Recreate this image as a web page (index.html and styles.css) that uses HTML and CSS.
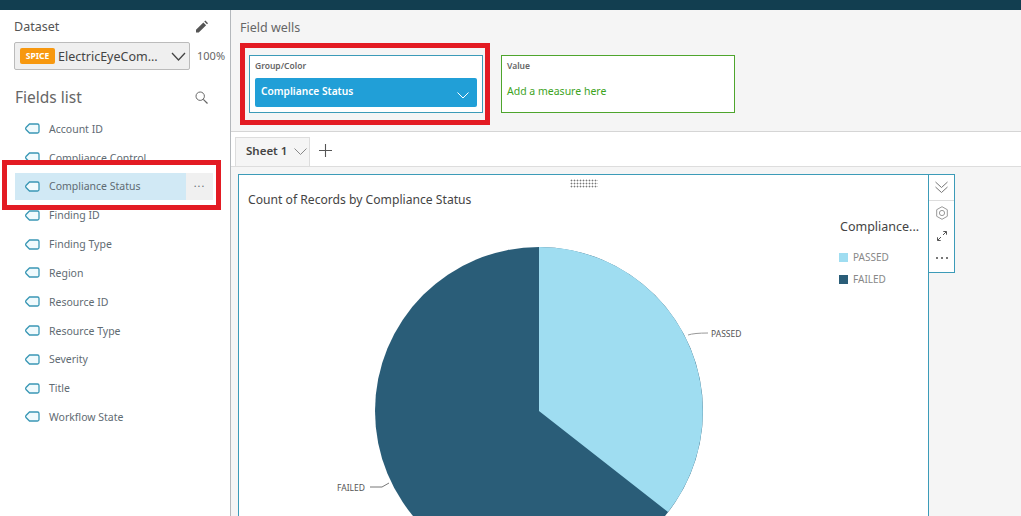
FILE: index.html
```html
<!DOCTYPE html>
<html lang="en">
<head>
  <meta charset="UTF-8">
  <title>Compliance Status analysis</title>
  <link rel="stylesheet" href="styles.css">
</head>
<body>
<svg class="defs" width="0" height="0">
  <symbol id="tag" viewBox="0 0 15 11">
    <path d="M4.5 1H12.5Q14 1 14 2.5V8.5Q14 10 12.5 10H4.5L1 6.5Q.3 5.5 1 4.5Z" fill="#f0fafd" stroke="#3a97b5" stroke-width="1.3"/>
  </symbol>
</svg>
<div class="topbar"></div>
<div class="app">
  <aside class="sidebar">
    <div class="dataset-head">
      <span>Dataset</span>
      <svg class="pencil" width="12" height="13" viewBox="0 0 14 14"><path d="M0 14V10.8L8.6 2.2L11.8 5.4L3.2 14ZM9.6 1.2L10.6.2Q10.9 0 11.2.2L13.8 2.8Q14 3.1 13.8 3.4L12.8 4.4Z" fill="#555"/></svg>
    </div>
    <div class="dataset-row">
      <div class="dataset-select">
        <span class="spice">SPICE</span>
        <span class="dataset-name">ElectricEyeCom...</span>
        <svg width="15" height="9" viewBox="0 0 15 9"><path d="M1 1L7.5 8L14 1" fill="none" stroke="#444" stroke-width="1.3"/></svg>
      </div>
      <span class="percent">100%</span>
    </div>
    <div class="fields-head">
      <span>Fields list</span>
      <svg width="13" height="13" viewBox="0 0 13 13"><circle cx="5.2" cy="5.2" r="4.2" fill="none" stroke="#666"/><path d="M8.3 8.3L12.5 12.5" stroke="#666" stroke-width="1.2"/></svg>
    </div>
    <ul class="fields">
      <li class="field"><svg class="tag"><use href="#tag"/></svg><span class="field-name">Account ID</span></li>
      <li class="field"><svg class="tag"><use href="#tag"/></svg><span class="field-name">Compliance Control</span></li>
      <li class="field selected"><svg class="tag"><use href="#tag"/></svg><span class="field-name">Compliance Status</span><span class="field-more">...</span></li>
      <li class="field"><svg class="tag"><use href="#tag"/></svg><span class="field-name">Finding ID</span></li>
      <li class="field"><svg class="tag"><use href="#tag"/></svg><span class="field-name">Finding Type</span></li>
      <li class="field"><svg class="tag"><use href="#tag"/></svg><span class="field-name">Region</span></li>
      <li class="field"><svg class="tag"><use href="#tag"/></svg><span class="field-name">Resource ID</span></li>
      <li class="field"><svg class="tag"><use href="#tag"/></svg><span class="field-name">Resource Type</span></li>
      <li class="field"><svg class="tag"><use href="#tag"/></svg><span class="field-name">Severity</span></li>
      <li class="field"><svg class="tag"><use href="#tag"/></svg><span class="field-name">Title</span></li>
      <li class="field"><svg class="tag"><use href="#tag"/></svg><span class="field-name">Workflow State</span></li>
    </ul>
  </aside>
  <main class="content">
    <section class="wells">
      <div class="wells-title">Field wells</div>
      <div class="wells-row">
        <div class="well well-group">
          <div class="well-label">Group/Color</div>
          <div class="pill">
            <span class="pill-text">Compliance Status</span>
            <svg width="12" height="7" viewBox="0 0 12 7"><path d="M.5 .5L6 6L11.5 .5" fill="none" stroke="#fff"/></svg>
          </div>
        </div>
        <div class="well well-value">
          <div class="well-label">Value</div>
          <div class="well-hint">Add a measure here</div>
        </div>
      </div>
    </section>
    <nav class="tabs">
      <div class="tab">
        <span class="tab-name">Sheet 1</span>
        <svg width="13" height="7" viewBox="0 0 13 7"><path d="M.5 .5L6.5 6.5L12.5 .5" fill="none" stroke="#888"/></svg>
      </div>
      <svg class="tab-add" width="13" height="13" viewBox="0 0 13 13"><path d="M6.5 0V13M0 6.5H13" stroke="#555" stroke-width="1.1"/></svg>
    </nav>
    <section class="canvas">
      <div class="visual">
        <div class="grip"></div>
        <div class="visual-title">Count of Records by Compliance Status</div>
        <div class="visual-body">
          <svg class="pie" width="560" height="310" viewBox="0 0 560 310">
            <circle cx="291" cy="205" r="164" fill="#2a5d78"/>
            <path d="M291 205V41A164 164 0 0 1 420 306Z" fill="#9fddf1"/>
            <path d="M440 129Q446 127 460 127" fill="none" stroke="#999"/>
            <text x="463" y="130.500" class="pie-label">PASSED</text>
            <path d="M122 281H134L141 277" fill="none" stroke="#777"/>
            <text x="89" y="284.500" class="pie-label">FAILED</text>
          </svg>
          <div class="legend">
            <div class="legend-title">Compliance...</div>
            <div class="legend-item"><span class="swatch swatch-passed"></span>PASSED</div>
            <div class="legend-item"><span class="swatch swatch-failed"></span>FAILED</div>
          </div>
        </div>
      </div>
      <div class="visual-menu">
        <div class="menu-top">
          <svg width="13" height="13" viewBox="0 0 13 13"><path d="M.5 1L6.500 6.500L12.500 1M.5 6L6.500 11.500L12.500 6" fill="none" stroke="#777"/></svg>
        </div>
        <svg width="12" height="14" viewBox="0 0 12 14"><path d="M6 .7L11.300 3.700V10.300L6 13.300L.7 10.300V3.700Z" fill="none" stroke="#999"/><circle cx="6" cy="7" r="2.600" fill="none" stroke="#999"/></svg>
        <svg class="menu-expand" width="10" height="10" viewBox="0 0 10 10"><path d="M6 4L9.300 .7M6.300 .5H9.500V3.700M4 6L.7 9.300M.5 6.300V9.500H3.700" fill="none" stroke="#555"/></svg>
        <span class="menu-dots"><i></i><i></i><i></i></span>
      </div>
    </section>
  </main>
</div>
<div class="callout callout-field"></div>
<div class="callout callout-well"></div>
</body>
</html>
```

FILE: styles.css
```css
* {
  box-sizing: border-box;
}
html, body {
  height: 516px;
  margin: 0;
  overflow: hidden;
}
body {
  font-family: "Noto Sans", Arial, sans-serif;
  color: #555;
  background: #fff;
  position: relative;
}
.defs {
  position: absolute;
}
.topbar {
  height: 10px;
  background: #123e50;
}
.app {
  display: flex;
  height: 506px;
}

/* left panel */
.sidebar {
  width: 231px;
  flex: none;
  border-right: 1px solid #b4b8bc;
  padding: 8px 0 0 14px;
}
.dataset-head {
  display: flex;
  justify-content: space-between;
  align-items: center;
  height: 16px;
  padding-right: 22px;
  font-size: 12.500px;
  color: #555;
}
.dataset-row {
  display: flex;
  align-items: center;
  margin-top: 8px;
}
.dataset-select {
  display: flex;
  align-items: center;
  width: 176px;
  height: 28px;
  padding: 0 3px 0 5px;
  background: #efefef;
  border: 1px solid #bbb;
  border-radius: 2px;
}
.spice {
  width: 35px;
  height: 16px;
  margin-right: 3px;
  border-radius: 2px;
  background: #f7980f;
  color: #fff;
  font-size: 8.500px;
  font-weight: 700;
  line-height: 16px;
  text-align: center;
}
.dataset-name {
  flex: 1;
  font-size: 12.500px;
  color: #444;
  white-space: nowrap;
}
.percent {
  margin-left: 7px;
  margin-bottom: 2px;
  font-size: 11px;
  color: #666;
}
.fields-head {
  display: flex;
  justify-content: space-between;
  align-items: center;
  margin-top: 15px;
  padding: 0 22px 0 1px;
  height: 24px;
  font-size: 15.500px;
  color: #666;
}
.fields {
  list-style: none;
  margin: 5.400px 0 0;
  padding: 0;
}
.field {
  display: flex;
  align-items: center;
  width: 198px;
  height: 28.800px;
  margin-left: 1px;
  padding-left: 10px;
  font-size: 10.500px;
  color: #5f6b73;
}
.tag {
  width: 15px;
  height: 11px;
  margin-right: 9px;
  flex: none;
}
.field-name {
  flex: 1;
}
.selected {
  height: 27px;
  margin-top: 1px;
  margin-bottom: 1px;
  background: linear-gradient(to right, #d1e9f5 171px, #f0f0f0 171px);
}
.selected .field-name {
  margin-bottom: 1px;
}
.field-more {
  width: 27px;
  margin-top: -6px;
  text-align: center;
  letter-spacing: 1px;
}

/* field wells */
.content {
  flex: 1;
  min-width: 0;
  display: flex;
  flex-direction: column;
}
.wells {
  height: 122px;
  padding: 9px 0 0 9px;
  background: #f5f5f5;
  border-bottom: 1px solid #d5d5d5;
}
.wells-title {
  height: 18px;
  font-size: 12.500px;
  color: #666;
}
.wells-row {
  display: flex;
  gap: 18px;
  margin-top: 18px;
  margin-left: 9px;
}
.well {
  width: 234px;
  height: 58px;
  padding: 4px 5px 5px;
  background: #fff;
  border: 1px solid #3c9bb8;
}
.well-value {
  border-color: #4ea52d;
}
.well-label {
  height: 16px;
  font-size: 8.500px;
  font-weight: 600;
  color: #666;
}
.pill {
  display: flex;
  justify-content: space-between;
  align-items: center;
  height: 29px;
  margin-top: 2px;
  padding: 0 8px 0 6px;
  background: #219fd7;
  border-radius: 2px;
  color: #fff;
  font-size: 10.200px;
  font-weight: 600;
}
.pill-text {
  margin-bottom: 3px;
}
.pill svg {
  margin-top: 5px;
}
.well-hint {
  margin-top: 8px;
  font-size: 10.500px;
  color: #3da31d;
}

/* sheet tabs */
.tabs {
  display: flex;
  align-items: center;
  height: 35px;
  padding-left: 4px;
  border-bottom: 1px solid #ddd;
}
.tab {
  display: flex;
  align-items: center;
  gap: 7px;
  width: 75px;
  height: 29px;
  margin-top: 5px;
  padding-left: 10px;
  background: #f5f5f5;
  border: 1px solid #ddd;
  border-bottom: 0;
  font-size: 11.500px;
  font-weight: 600;
  color: #444;
}
.tab-name {
  margin-bottom: 3px;
}
.tab svg {
  margin-bottom: 2px;
}
.tab-add {
  margin-left: 9px;
  margin-top: 3px;
}

/* visual */
.canvas {
  flex: 1;
  display: flex;
  align-items: flex-start;
  padding: 7px 0 0 7px;
  background: #f5f5f5;
  overflow: hidden;
}
.visual {
  position: relative;
  width: 691px;
  height: 360px;
  flex: none;
  background: #fff;
  border: 1px solid #3c9bb8;
}
.grip {
  position: absolute;
  left: 331px;
  top: 4px;
  width: 28px;
  height: 9px;
  background: radial-gradient(#777 .8px, transparent 1.1px) 0 0 / 3px 3px;
}
.visual-title {
  padding: 16px 0 0 9px;
  height: 36px;
  font-size: 12.150px;
  color: #444;
}
.visual-body {
  display: flex;
  justify-content: space-between;
}
.pie {
  flex: none;
  margin-top: -5px;
  margin-left: 9px;
}
.pie-label {
  font-family: "Noto Sans", Arial, sans-serif;
  font-size: 8.500px;
  fill: #555;
}
.legend {
  width: 89px;
  margin-top: 7px;
}
.legend-title {
  height: 28px;
  padding-left: 1px;
  font-size: 12.500px;
  color: #444;
}
.legend-item {
  display: flex;
  align-items: center;
  gap: 5px;
  height: 22px;
  font-size: 10px;
  color: #888;
}
.swatch {
  width: 9px;
  height: 9px;
}
.swatch-passed {
  background: #9fddf1;
}
.swatch-failed {
  background: #2a5d78;
}
.visual-menu {
  display: flex;
  flex-direction: column;
  align-items: center;
  gap: 10px;
  width: 27px;
  height: 99px;
  margin-left: -1px;
  background: #fff;
  border: 1px solid #3c9bb8;
}
.menu-top {
  display: flex;
  justify-content: center;
  align-items: center;
  width: 100%;
  height: 26px;
  margin-bottom: -5px;
  border-bottom: 1px solid #ddd;
}
.menu-expand {
  margin-top: 1px;
}
.menu-dots {
  display: flex;
  gap: 3px;
  margin-top: 6px;
}
.menu-dots i {
  width: 2px;
  height: 2px;
  background: #777;
}

/* red annotations drawn over the screenshot */
.callout {
  position: absolute;
  border: 5px solid #e31b23;
}
.callout-field {
  left: 2px;
  top: 160px;
  width: 219px;
  height: 50px;
}
.callout-well {
  left: 240px;
  top: 43px;
  width: 250px;
  height: 82px;
}
```
